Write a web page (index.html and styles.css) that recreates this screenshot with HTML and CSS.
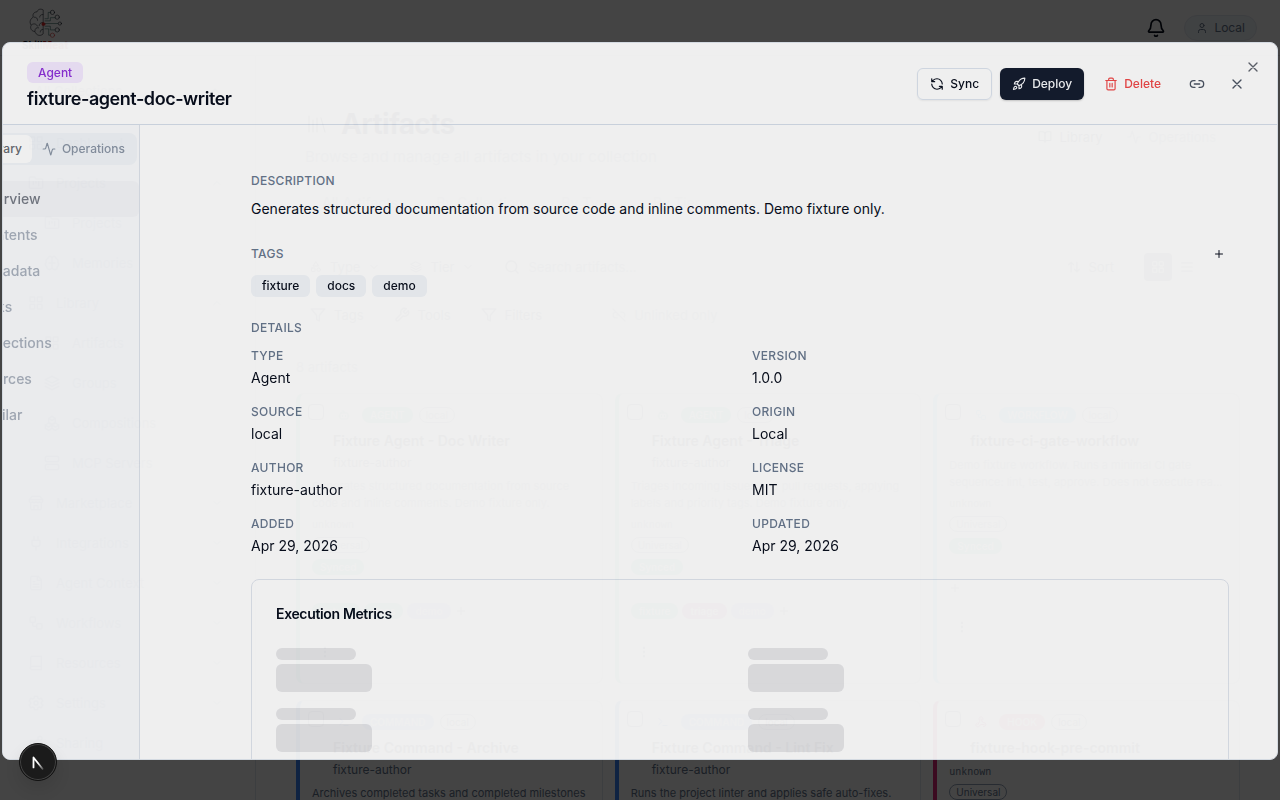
FILE: index.html
```html
<!DOCTYPE html>
<html lang="en">
<head>
<meta charset="utf-8">
<meta name="viewport" content="width=device-width, initial-scale=1">
<title>SkillMeat</title>
<link rel="stylesheet" href="styles.css">
</head>
<body>
<svg class="defs" aria-hidden="true">
  <symbol id="x" viewBox="0 0 24 24"><path d="M18 6 6 18M6 6l12 12"/></symbol>
  <symbol id="up" viewBox="0 0 24 24"><path d="m18 15-6-6-6 6"/></symbol>
  <symbol id="down" viewBox="0 0 24 24"><path d="m6 9 6 6 6-6"/></symbol>
  <symbol id="plus" viewBox="0 0 24 24"><path d="M5 12h14M12 5v14"/></symbol>
  <symbol id="activity" viewBox="0 0 24 24"><path d="M22 12h-2.5a2 2 0 0 0-1.9 1.5l-2.4 8.3a.25.25 0 0 1-.5 0L9.2 2.2a.25.25 0 0 0-.4 0l-2.4 8.3A2 2 0 0 1 4.500 12H2"/></symbol>
  <symbol id="grid" viewBox="0 0 24 24"><rect x="3" y="3" width="7" height="7" rx="1"/><rect x="14" y="3" width="7" height="7" rx="1"/><rect x="14" y="14" width="7" height="7" rx="1"/><rect x="3" y="14" width="7" height="7" rx="1"/></symbol>
  <symbol id="folder" viewBox="0 0 24 24"><path d="M4 20h16a2 2 0 0 0 2-2V8a2 2 0 0 0-2-2h-8l-2-3H4a2 2 0 0 0-2 2v13c0 1 1 2 2 2ZM8 10v4M12 10v2M16 10v6"/></symbol>
  <symbol id="brain" viewBox="0 0 24 24"><path d="M12 5a3 3 0 1 0-6 .1A4 4 0 0 0 3.500 11a4 4 0 0 0 .5 6.500A4 4 0 1 0 12 18ZM12 5a3 3 0 1 1 6 .1 4 4 0 0 1 2.500 5.900 4 4 0 0 1-.5 6.500A4 4 0 1 1 12 18M8 12h8"/></symbol>
  <symbol id="layers" viewBox="0 0 24 24"><path d="m12 2 10 5-10 5L2 7ZM2 12l10 5 10-5M2 17l10 5 10-5"/></symbol>
  <symbol id="boxes" viewBox="0 0 24 24"><path d="m7 12 5 3v5l-5 3-5-3v-5ZM17 12l5 3v5l-5 3-5-3v-5ZM12 2l5 3v6l-5 3-5-3V5ZM2 15l5 3 5-3 5 3 5-3M7 5l5 3 5-3"/></symbol>
  <symbol id="server" viewBox="0 0 24 24"><rect x="2" y="2" width="20" height="8" rx="2"/><rect x="2" y="14" width="20" height="8" rx="2"/><path d="M6 6h.01M6 18h.01"/></symbol>
  <symbol id="store" viewBox="0 0 24 24"><path d="m2 7 4-5h12l4 5v3a3 3 0 0 1-5 0 3 3 0 0 1-5 0 3 3 0 0 1-5 0 3 3 0 0 1-5 0ZM4 12v8a2 2 0 0 0 2 2h12a2 2 0 0 0 2-2v-8M9 22v-6h6v6M2 7h20"/></symbol>
  <symbol id="plug" viewBox="0 0 24 24"><path d="M12 22v-5M9 8V2M15 8V2M18 8v5a4 4 0 0 1-4 4h-4a4 4 0 0 1-4-4V8Z"/></symbol>
  <symbol id="file" viewBox="0 0 24 24"><path d="M15 2H6a2 2 0 0 0-2 2v16a2 2 0 0 0 2 2h12a2 2 0 0 0 2-2V7ZM14 2v6h6M8 10h2M8 14h8M8 18h8"/></symbol>
  <symbol id="flow" viewBox="0 0 24 24"><rect x="3" y="3" width="8" height="8" rx="2"/><path d="M7 11v4a2 2 0 0 0 2 2h4"/><rect x="13" y="13" width="8" height="8" rx="2"/></symbol>
  <symbol id="book" viewBox="0 0 24 24"><path d="M4 19V4a2 2 0 0 1 2-2h14v20H6a2 2 0 0 1 0-5h14"/></symbol>
  <symbol id="gear" viewBox="0 0 24 24"><path d="M10 2h4l1 3 2 1 3-1 2 4-2 2v2l2 2-2 4-3-1-2 1-1 3h-4l-1-3-2-1-3 1-2-4 2-2v-2L2 9l2-4 3 1 2-1Z"/><circle cx="12" cy="12" r="3"/></symbol>
  <symbol id="share" viewBox="0 0 24 24"><circle cx="18" cy="5" r="3"/><circle cx="6" cy="12" r="3"/><circle cx="18" cy="19" r="3"/><path d="m9 13 6 4M15 7l-6 3"/></symbol>
  <symbol id="library" viewBox="0 0 24 24"><path d="m16 6 4 14M12 6v14M8 8v12M4 4v16"/></symbol>
  <symbol id="openbook" viewBox="0 0 24 24"><path d="M12 7v14M3 18a1 1 0 0 1-1-1V4a1 1 0 0 1 1-1h5a4 4 0 0 1 4 4 4 4 0 0 1 4-4h5a1 1 0 0 1 1 1v13a1 1 0 0 1-1 1h-6a3 3 0 0 0-3 3 3 3 0 0 0-3-3Z"/></symbol>
  <symbol id="shapes" viewBox="0 0 24 24"><path d="m12 2 5 8H7Z"/><rect x="3" y="14" width="7" height="7" rx="1"/><circle cx="17.500" cy="17.500" r="3.500"/></symbol>
  <symbol id="search" viewBox="0 0 24 24"><circle cx="11" cy="11" r="8"/><path d="m21 21-4-4"/></symbol>
  <symbol id="filter" viewBox="0 0 24 24"><path d="M22 3H2l8 9.500V19l4 2v-8.500Z"/></symbol>
  <symbol id="wrench" viewBox="0 0 24 24"><path d="M14.700 6.300a1 1 0 0 0 0 1.400l1.600 1.600a1 1 0 0 0 1.400 0l3.800-3.800a6 6 0 0 1-7.900 7.900l-6.900 6.900a2 2 0 0 1-3-3l6.900-6.900a6 6 0 0 1 7.900-7.900Z"/></symbol>
  <symbol id="unlink" viewBox="0 0 24 24"><path d="M9 17H7A5 5 0 0 1 7 7M15 7h2a5 5 0 0 1 4 8M8 12h4M2 2l20 20"/></symbol>
  <symbol id="sort" viewBox="0 0 24 24"><path d="m21 16-4 4-4-4M17 20V4M3 8l4-4 4 4M7 4v16"/></symbol>
  <symbol id="list" viewBox="0 0 24 24"><path d="M3 5h18M3 12h18M3 19h18"/></symbol>
  <symbol id="bot" viewBox="0 0 24 24"><path d="M12 8V4H8M2 14h2M20 14h2M15 13v2M9 13v2"/><rect x="4" y="8" width="16" height="12" rx="2"/></symbol>
  <symbol id="terminal" viewBox="0 0 24 24"><path d="m4 17 6-6-6-6M12 19h8"/></symbol>
  <symbol id="hook" viewBox="0 0 24 24"><path d="M18 17h-6c-1 0-2 1-2.500 2A4 4 0 1 1 4 14M6 17l3-6c.6-1 .3-2-.2-3a4 4 0 1 1 7-1M12 6l3 6c.5 1 1.700 1.300 3 1a4 4 0 1 1-1 8"/></symbol>
  <symbol id="dots" viewBox="0 0 24 24"><circle cx="12" cy="5" r="1"/><circle cx="12" cy="12" r="1"/><circle cx="12" cy="19" r="1"/></symbol>
  <symbol id="user" viewBox="0 0 24 24"><circle cx="12" cy="7" r="4"/><path d="M19 21v-2a4 4 0 0 0-4-4H9a4 4 0 0 0-4 4v2"/></symbol>
  <symbol id="bell" viewBox="0 0 24 24"><path d="M10.300 21a2 2 0 0 0 3.400 0M3.300 15.300A1 1 0 0 0 4 17h16a1 1 0 0 0 .7-1.700C19.400 14 18 12.500 18 8A6 6 0 0 0 6 8c0 4.500-1.400 6-2.700 7.300"/></symbol>
  <symbol id="refresh" viewBox="0 0 24 24"><path d="M21 12a9 9 0 0 0-9-9 9.750 9.750 0 0 0-6.740 2.740L3 8M3 3v5h5M3 12a9 9 0 0 0 9 9 9.750 9.750 0 0 0 6.740-2.740L21 16M16 16h5v5"/></symbol>
  <symbol id="rocket" viewBox="0 0 24 24"><path d="M4.500 16.500c-1.500 1.260-2 5-2 5s3.740-.5 5-2c.71-.84.7-2.130-.09-2.910a2.180 2.180 0 0 0-2.910-.09ZM12 15l-3-3a22 22 0 0 1 2-3.950A12.880 12.880 0 0 1 22 2c0 2.720-.78 7.500-6 11a22.350 22.350 0 0 1-4 2ZM9 12H4s.55-3.030 2-4c1.620-1.080 5 0 5 0M12 15v5s3.030-.55 4-2c1.080-1.620 0-5 0-5"/></symbol>
  <symbol id="trash" viewBox="0 0 24 24"><path d="M3 6h18M19 6v14a2 2 0 0 1-2 2H7a2 2 0 0 1-2-2V6M8 6V4a2 2 0 0 1 2-2h4a2 2 0 0 1 2 2v2M10 11v6M14 11v6"/></symbol>
  <symbol id="link" viewBox="0 0 24 24"><path d="M9 17H7A5 5 0 0 1 7 7h2M15 7h2a5 5 0 1 1 0 10h-2M8 12h8"/></symbol>
</svg>

<div class="app">
  <header class="topbar">
    <a class="brand" href="#">
      <svg class="brand-mark" viewBox="0 0 64 56">
        <path d="M28 3c-5-3-10 0-11 4-6 0-9 5-7 10-6 3-8 10-4 15-3 6 1 12 7 12 2 7 10 10 15 5ZM28 12c-4 0-6 2-6 5M12 17c4 0 6 2 6 6M7 31c5-3 9-1 11 3M28 27c-5 0-7 3-7 6M13 43c0-5 3-7 7-6M28 40c-3 0-5 2-5 5"/>
        <path class="teal" d="M32 20h6V8h5M32 24h10v-6h9M32 29h24M32 34h10v7h9M32 39h7v12h3"/>
        <circle cx="46" cy="8" r="4"/><circle cx="55" cy="17" r="4"/><circle cx="60" cy="29" r="3"/><circle cx="55" cy="41" r="4"/><circle class="red" cx="46" cy="51" r="4"/><circle class="red fill" cx="29" cy="30" r="3"/>
      </svg>
      <span class="brand-name">Skill<b>Meat</b></span>
    </a>
    <div class="top-actions">
      <button class="bare" aria-label="Notifications"><svg class="i20"><use href="#bell"/></svg></button>
      <button class="pill"><svg class="i12"><use href="#user"/></svg>Local</button>
    </div>
  </header>

  <div class="body">
    <nav class="sidebar" aria-label="Main">
      <button class="picker">All Collections<svg class="i16"><use href="#up"/></svg></button>
      <a href="#"><svg class="i16"><use href="#grid"/></svg>Dashboard</a>
      <a href="#"><svg class="i16"><use href="#folder"/></svg>Projects<svg class="i12 chev"><use href="#up"/></svg></a>
      <a class="sub" href="#"><svg class="i16"><use href="#folder"/></svg>Projects</a>
      <a class="sub" href="#"><svg class="i16"><use href="#brain"/></svg>Memories</a>
      <a href="#"><svg class="i16"><use href="#grid"/></svg>Library<svg class="i12 chev"><use href="#up"/></svg></a>
      <a class="sub" href="#"><svg class="i16"><use href="#grid"/></svg>Artifacts</a>
      <a class="sub" href="#"><svg class="i16"><use href="#layers"/></svg>Groups</a>
      <a class="sub" href="#"><svg class="i16"><use href="#boxes"/></svg>Compositions</a>
      <a class="sub" href="#"><svg class="i16"><use href="#server"/></svg>MCP Servers</a>
      <a href="#"><svg class="i16"><use href="#store"/></svg>Marketplace<svg class="i12 chev"><use href="#down"/></svg></a>
      <a href="#"><svg class="i16"><use href="#plug"/></svg>Integrations<svg class="i12 chev"><use href="#down"/></svg></a>
      <a href="#"><svg class="i16"><use href="#file"/></svg>Agent Context<svg class="i12 chev"><use href="#down"/></svg></a>
      <a href="#"><svg class="i16"><use href="#flow"/></svg>Workflows<svg class="i12 chev"><use href="#down"/></svg></a>
      <a href="#"><svg class="i16"><use href="#book"/></svg>Resources<svg class="i12 chev"><use href="#down"/></svg></a>
      <a href="#"><svg class="i16"><use href="#gear"/></svg>Settings<svg class="i12 chev"><use href="#down"/></svg></a>
      <a href="#"><svg class="i16"><use href="#share"/></svg>Sharing</a>
    </nav>

    <main class="page">
      <div class="page-head">
        <div>
          <h1><svg class="i24"><use href="#library"/></svg>Artifacts</h1>
          <p>Browse and manage all artifacts in your collection</p>
        </div>
        <div class="modes">
          <button class="bare"><svg class="i14"><use href="#openbook"/></svg>Library</button>
          <button class="bare dim"><svg class="i14"><use href="#activity"/></svg>Operations</button>
        </div>
      </div>
      <div class="view-tabs"><button class="bare on">All Artifacts</button><button class="bare">By Collection</button><button class="bare">By Type</button><button class="bare">By Tier</button></div>
      <div class="filters">
        <button class="bare"><svg class="i12"><use href="#shapes"/></svg>Type<svg class="i12"><use href="#down"/></svg></button>
        <button class="bare"><svg class="i12"><use href="#layers"/></svg>Tier<svg class="i12"><use href="#down"/></svg></button>
        <label class="search"><svg class="i16"><use href="#search"/></svg><input type="search" placeholder="Search artifacts..." aria-label="Search artifacts"></label>
        <button class="bare sort"><svg class="i14"><use href="#sort"/></svg>Sort</button>
        <div class="views"><button class="bare active" aria-label="Grid view"><svg class="i14"><use href="#grid"/></svg></button><button class="bare" aria-label="List view"><svg class="i14"><use href="#list"/></svg></button></div>
      </div>
      <div class="filters second">
        <button class="bare"><svg class="i16"><use href="#filter"/></svg>Tags</button>
        <button class="bare"><svg class="i16"><use href="#wrench"/></svg>Tools</button>
        <button class="bare"><svg class="i16"><use href="#filter"/></svg>Filters</button>
        <button class="bare dim unlinked"><svg class="i14"><use href="#unlink"/></svg>Unlinked only</button>
      </div>
      <p class="count">8 artifacts</p>
      <div class="cards">
        <article class="card green">
          <div class="card-top"><input type="checkbox" aria-label="Select Fixture Agent - Doc Writer"><svg class="i12 kind"><use href="#bot"/></svg><span class="type">AGENT</span><span class="outline">local</span></div>
          <h2>Fixture Agent - Doc Writer</h2><p class="author">fixture-author</p>
          <p class="desc">Generates structured documentation from source code and inline comments. Demo fixture only.</p>
          <p class="mono">unknown</p><span class="outline">Universal</span>
          <div class="status"><span class="synced">Synced</span></div>
          <div class="tags"><span class="t-green">fixture</span><span class="t-green">docs</span><span class="t-violet">demo</span><svg class="i12"><use href="#plus"/></svg></div>
          <svg class="i14 more"><use href="#dots"/></svg>
        </article>
        <article class="card green">
          <div class="card-top"><input type="checkbox" aria-label="Select Fixture Agent - Triage"><svg class="i12 kind"><use href="#bot"/></svg><span class="type">AGENT</span><span class="outline">local</span></div>
          <h2>Fixture Agent - Triage</h2><p class="author">fixture-author</p>
          <p class="desc">Triages incoming issues and pull requests, applying labels and priority tags. Demo fixture only.</p>
          <p class="mono">unknown</p><span class="outline">Universal</span>
          <div class="status"><span class="synced">Synced</span></div>
          <div class="tags"><span class="t-green">fixture</span><span class="t-pink">triage</span><span class="t-violet">demo</span><svg class="i12"><use href="#plus"/></svg></div>
          <svg class="i14 more"><use href="#dots"/></svg>
        </article>
        <article class="card cyan">
          <div class="card-top"><input type="checkbox" aria-label="Select fixture-ci-gate-workflow"><svg class="i12 kind"><use href="#flow"/></svg><span class="type">WORKFLOW</span><span class="outline">local</span></div>
          <h2>fixture-ci-gate-workflow</h2>
          <p class="desc">Demo fixture workflow. Runs a minimal CI gate sequence: lint, test, approve. Does not execute rea...</p>
          <p class="mono">unknown</p><span class="outline">Universal</span>
          <div class="status"><span class="synced">Synced</span></div>
          <div class="tags"><svg class="i12"><use href="#plus"/></svg></div>
          <svg class="i14 more"><use href="#dots"/></svg>
        </article>
        <article class="card blue">
          <div class="card-top"><input type="checkbox" aria-label="Select Fixture Command - Archive"><svg class="i12 kind"><use href="#terminal"/></svg><span class="type">COMMAND</span><span class="outline">local</span></div>
          <h2>Fixture Command - Archive</h2><p class="author">fixture-author</p>
          <p class="desc">Archives completed tasks and completed milestones</p>
        </article>
        <article class="card blue">
          <div class="card-top"><input type="checkbox" aria-label="Select Fixture Command - Lint Fix"><svg class="i12 kind"><use href="#terminal"/></svg><span class="type">COMMAND</span><span class="outline">local</span></div>
          <h2>Fixture Command - Lint Fix</h2><p class="author">fixture-author</p>
          <p class="desc">Runs the project linter and applies safe auto-fixes.</p>
        </article>
        <article class="card pink">
          <div class="card-top"><input type="checkbox" aria-label="Select fixture-hook-pre-commit"><svg class="i12 kind"><use href="#hook"/></svg><span class="type">HOOK</span><span class="outline">local</span></div>
          <h2>fixture-hook-pre-commit</h2>
          <p class="mono">unknown</p><span class="outline">Universal</span>
        </article>
      </div>
    </main>
  </div>
</div>

<div class="overlay"></div>

<section class="dialog" role="dialog" aria-modal="true" aria-labelledby="dialog-title">
  <header class="dialog-head">
    <div class="dialog-title">
      <span class="agent-badge">Agent</span>
      <h2 id="dialog-title">fixture-agent-doc-writer</h2>
    </div>
    <div class="actions">
      <button class="btn line"><svg class="i14"><use href="#refresh"/></svg>Sync</button>
      <button class="btn solid"><svg class="i14"><use href="#rocket"/></svg>Deploy</button>
      <button class="btn danger"><svg class="i14"><use href="#trash"/></svg>Delete</button>
      <button class="btn icon" aria-label="Copy link"><svg class="i16"><use href="#link"/></svg></button>
      <button class="btn icon" aria-label="Close panel"><svg class="i16"><use href="#x"/></svg></button>
    </div>
    <button class="corner-close" aria-label="Close"><svg class="i16"><use href="#x"/></svg></button>
  </header>
  <div class="dialog-body">
    <aside class="rail">
      <div class="rail-inner">
        <div class="switch"><button class="on">Library</button><button><svg class="i14"><use href="#activity"/></svg>Operations</button></div>
        <nav class="rail-nav" aria-label="Artifact sections">
          <a class="current" href="#">Overview</a><a href="#">Contents</a><a href="#">Metadata</a><a href="#">Links</a><a href="#">Collections</a><a href="#">Sources</a><a href="#">Similar</a>
        </nav>
      </div>
    </aside>
    <div class="detail">
      <section>
        <h3>Description</h3>
        <p class="lead">Generates structured documentation from source code and inline comments. Demo fixture only.</p>
      </section>
      <section>
        <div class="row"><h3>Tags</h3><button class="add" aria-label="Add tag"><svg class="i12"><use href="#plus"/></svg></button></div>
        <div class="chips"><span>fixture</span><span>docs</span><span>demo</span></div>
      </section>
      <section class="details">
        <h3>Details</h3>
        <dl>
          <div><dt>Type</dt><dd>Agent</dd></div><div><dt>Version</dt><dd>1.0.0</dd></div>
          <div><dt>Source</dt><dd>local</dd></div><div><dt>Origin</dt><dd>Local</dd></div>
          <div><dt>Author</dt><dd>fixture-author</dd></div><div><dt>License</dt><dd>MIT</dd></div>
          <div><dt>Added</dt><dd>Apr 29, 2026</dd></div><div><dt>Updated</dt><dd>Apr 29, 2026</dd></div>
        </dl>
      </section>
      <section class="metrics">
        <h4>Execution Metrics</h4>
        <div class="skeletons">
          <div><i></i><b></b></div><div><i></i><b></b></div>
          <div><i></i><b></b></div><div><i></i><b></b></div>
        </div>
      </section>
    </div>
  </div>
</section>

<button class="dev" aria-label="Open developer tools">
  <svg viewBox="0 0 40 40"><defs><linearGradient id="fade" x1="0" y1="0" x2="1" y2="1"><stop offset=".5" stop-color="#fff"/><stop offset="1" stop-color="#fff" stop-opacity="0.3"/></linearGradient></defs><path d="M15 26V15l10 12.500" fill="none" stroke="url(#fade)" stroke-width="2"/></svg>
</button>
</body>
</html>
```
FILE: styles.css
```css
* { box-sizing: border-box; }
body { margin: 0; height: 100vh; overflow: hidden; font: 14px/20px Inter, "Liberation Sans", sans-serif; color: #020817; background: #fff; }
h1, h2, h3, h4, p, dl, dd { margin: 0; }
a { color: inherit; text-decoration: none; }
button, input { font: inherit; color: inherit; }
button { padding: 0; border: 0; background: none; }
svg { flex: none; fill: none; stroke: currentColor; stroke-width: 2; stroke-linecap: round; stroke-linejoin: round; }
.defs { position: absolute; width: 0; height: 0; }
.i12 { width: 12px; height: 12px; }
.i14 { width: 14px; height: 14px; }
.i16 { width: 16px; height: 16px; }
.i20 { width: 20px; height: 20px; }
.i24 { width: 24px; height: 24px; }

/* Application page */
.app { height: 100vh; overflow: hidden; display: flex; flex-direction: column; }
.topbar { flex: none; height: 56px; display: flex; justify-content: space-between; align-items: center; padding: 0 23px 0 22px; border-bottom: 1px solid #e2e8f0; }
.brand { height: 40px; display: flex; flex-direction: column; align-items: center; line-height: 14px; }
.brand-mark { width: 34px; height: 30px; stroke-width: 1; }
.brand-mark .teal { stroke: #134e4a; }
.brand-mark .red { stroke: #dc2626; }
.brand-mark .fill { fill: #dc2626; }
.brand-name { font-size: 10px; font-weight: 700; }
.brand-name b { color: #b91c1c; }
.top-actions { display: flex; align-items: center; gap: 18px; }
.bare { display: flex; align-items: center; gap: 8px; }
.pill { display: flex; align-items: center; gap: 6px; height: 26px; padding: 0 11px; border: 1px solid #e2e8f0; border-radius: 13px; background: #f1f5f9; color: #64748b; font-size: 12px; }
.body { flex: 1; min-height: 0; display: flex; }
.sidebar { flex: none; width: 256px; border-right: 1px solid #e2e8f0; padding: 17px 32px 0 28px; display: flex; flex-direction: column; gap: 4px; color: #94a3b8; font-size: 13px; }
.sidebar a { flex: none; display: flex; align-items: center; gap: 12px; height: 36px; }
.sidebar .sub { padding-left: 16px; }
.chev { margin-left: auto; }
.picker { display: flex; justify-content: space-between; align-items: center; height: 36px; margin-bottom: 12px; padding-left: 7px; }
.page { flex: 1; min-width: 0; padding: 50px 40px 0; }
.page-head { display: flex; justify-content: space-between; align-items: center; padding: 0 24px 0 9px; }
h1 { display: flex; align-items: center; gap: 12px; font-size: 28px; line-height: 36px; letter-spacing: -.025em; color: #1e293b; }
h1 svg { stroke-width: 1; }
.page-head p { font-size: 15px; line-height: 30px; color: #94a3b8; }
.modes { display: flex; gap: 24px; margin-bottom: 4px; color: #475569; font-size: 13px; }
.dim { color: #94a3b8; }
.view-tabs { display: flex; gap: 38px; padding: 20px 26px; color: #b4bfcd; line-height: 22px; }
.view-tabs .on { color: #94a3b8; }
.filters { display: flex; align-items: center; gap: 30px; height: 48px; margin-top: 9px; padding: 0 46px 0 14px; color: #64748b; font-size: 13px; }
.filters.second { margin: 0; }
.filters .unlinked { margin-left: 40px; color: #94a3b8; }
.search { flex: 1; display: flex; align-items: center; gap: 8px; }
.search input { flex: 1; border: 0; outline: 0; background: none; padding: 0; }
.search input::placeholder { color: #94a3b8; }
.views { display: flex; gap: 8px; }
.views .active { background: #64748b; color: #fff; border-radius: 4px; padding: 7px; }
.count { padding: 18px 0 16px; color: #94a3b8; font-size: 13px; }
.cards { display: grid; grid-template-columns: repeat(3, minmax(0, 1fr)); grid-auto-rows: 291px; gap: 16px 12px; }
.card { border: 1px solid #e2e8f0; border-left: 4px solid var(--hue); border-radius: 8px; padding: 9px 12px; }
.card.green { --hue: #6ee7b7; }
.card.cyan { --hue: #67e8f9; }
.card.blue { --hue: #3b82f6; }
.card.pink { --hue: #db2777; }
.card-top { display: flex; align-items: center; gap: 6px; height: 24px; margin-left: -4px; }
.card-top input { appearance: none; width: 16px; height: 16px; border: 1px solid #64748b; border-radius: 4px; margin: 0 8px 6px 0; }
.kind { color: var(--hue); margin-right: 6px; }
.type, .synced, .tags span { border-radius: 8px; padding: 0 8px; font-size: 10px; font-weight: 600; line-height: 16px; color: #fff; background: var(--hue); }
.card.blue .type { background: #93c5fd; }
.card.pink .type { background: #fb7185; }
.outline { display: inline-block; border: 1px solid #94a3b8; border-radius: 8px; padding: 0 6px; font-size: 10px; line-height: 14px; color: #64748b; }
.card h2 { margin: 2px 0 0 21px; font-size: 14px; line-height: 23px; font-weight: 600; color: #334155; }
.card .author { margin-left: 21px; line-height: 21px; font-size: 12px; color: #64748b; }
.desc { margin-top: 5px; font-size: 11px; line-height: 17px; color: #64748b; }
.mono { margin-top: 6px; font: 10px/16px "Liberation Mono", monospace; color: #64748b; }
.status { margin: 4px 0 28px; line-height: 16px; }
.green .desc, .cyan .desc, .green .outline, .cyan .outline, .green .mono, .cyan .mono { color: #94a3b8; }
.synced { background: #6ee7b7; display: inline-block; }
.tags { display: flex; align-items: center; gap: 4px; color: #64748b; }
.tags .t-green { background: #6ee7b7; }
.tags .t-pink { background: #f472b6; }
.tags .t-violet { background: #c4b5fd; }
.more { display: block; margin: 26px 0 0 6px; color: #64748b; }
.overlay { position: fixed; inset: 0; background: rgba(0, 0, 0, .735); }

/* Artifact dialog */
.dialog { position: fixed; inset: 42px 2px 40px; display: flex; flex-direction: column; overflow: hidden; border: 1px solid #e2e8f0; border-radius: 8px; background: #fff; opacity: .915; }
.dialog-head { flex: none; position: relative; display: flex; justify-content: space-between; align-items: center; height: 82px; padding: 0 24px; border-bottom: 1px solid #d5deea; }
.dialog-title { display: flex; flex-direction: column; align-items: flex-start; gap: 2px; padding-top: 7px; }
.agent-badge { padding: 0 11px; border-radius: 6px; background: #f3e8ff; color: #8b2bd9; font-size: 12px; line-height: 21px; font-weight: 500; }
.dialog-title h2 { font-size: 18px; line-height: 28px; font-weight: 600; letter-spacing: -.025em; }
.actions { display: flex; gap: 8px; }
.btn { display: flex; align-items: center; justify-content: center; gap: 6px; height: 32px; padding: 0 12px; border-radius: 6px; font-size: 12px; font-weight: 500; }
.line { border: 1px solid #dbe3ee; box-shadow: 0 1px 2px rgba(0, 0, 0, .06); }
.solid { background: #0f172a; color: #f8fafc; box-shadow: 0 1px 2px rgba(0, 0, 0, .2); }
.danger { color: #ef4444; }
.icon { width: 32px; padding: 0; color: #475060; }
.corner-close { position: absolute; top: 16px; right: 16px; width: 16px; height: 16px; color: #5c616b; }
.corner-close svg { display: block; }
.dialog-body { flex: 1; min-height: 0; display: flex; }
.rail { flex: none; width: 137px; overflow: hidden; display: flex; justify-content: flex-end; background: #fafbfd; border-right: 1px solid #dce2eb; color: #a8b0bd; }
.rail-inner { flex: none; width: 196px; padding-top: 8px; }
.switch { display: flex; justify-content: flex-end; margin-right: 2px; padding: 2px; border-radius: 8px; background: #f1f5f9; }
.switch button { display: flex; align-items: center; gap: 6px; height: 28px; padding: 0 10px; border-radius: 6px; font-size: 12px; font-weight: 500; color: #8893a4; }
.switch .on { background: #fff; color: #65686f; }
.rail-nav { display: flex; flex-direction: column; margin-top: 16px; }
.rail-nav a { height: 36px; padding: 8px 0 8px 34px; border-radius: 6px; font-weight: 500; }
.rail-nav .current { background: #f5f6f9; color: #747984; }
.detail { flex: 1; min-width: 0; overflow: hidden; display: flex; flex-direction: column; gap: 24px; padding: 46px 48px 0 111px; }
h3, dt { font-size: 12px; line-height: 20px; font-weight: 500; text-transform: uppercase; letter-spacing: .025em; color: #64748b; }
.lead { margin-top: 6px; line-height: 23px; }
.row { display: flex; justify-content: space-between; align-items: center; }
.add { display: flex; padding: 0 4px; }
.chips { display: flex; gap: 6px; margin-top: 11px; }
.chips span { padding: 0 11px; border-radius: 6px; background: #f1f5f9; font-size: 12px; line-height: 22px; font-weight: 500; }
.details { margin-top: -3px; }
dl { display: grid; grid-template-columns: 1fr 1fr; gap: 12px 24px; margin-top: 8px; }
dd { line-height: 24px; }
.metrics { flex: none; margin-top: -3px; padding: 24px; border: 1px solid #dfe4ed; border-radius: 8px; min-height: 240px; }
h4 { font-size: 14px; line-height: 20px; font-weight: 600; letter-spacing: -.025em; }
.skeletons { display: grid; grid-template-columns: 1fr 1fr; gap: 16px; margin-top: 24px; }
.skeletons i { display: block; width: 80px; height: 12px; border-radius: 6px; background: #e6e6e9; }
.skeletons b { display: block; width: 96px; height: 28px; margin-top: 4px; border-radius: 6px; background: #e6e6e9; }

.dev { position: fixed; left: 19px; bottom: 19px; width: 38px; height: 38px; border-radius: 50%; background: #1b1b1b; border: 1px solid #111; box-shadow: inset 0 0 0 1px #444, 0 8px 16px rgba(0, 0, 0, .1); }
.dev svg { display: block; width: 36px; height: 36px; }
```
